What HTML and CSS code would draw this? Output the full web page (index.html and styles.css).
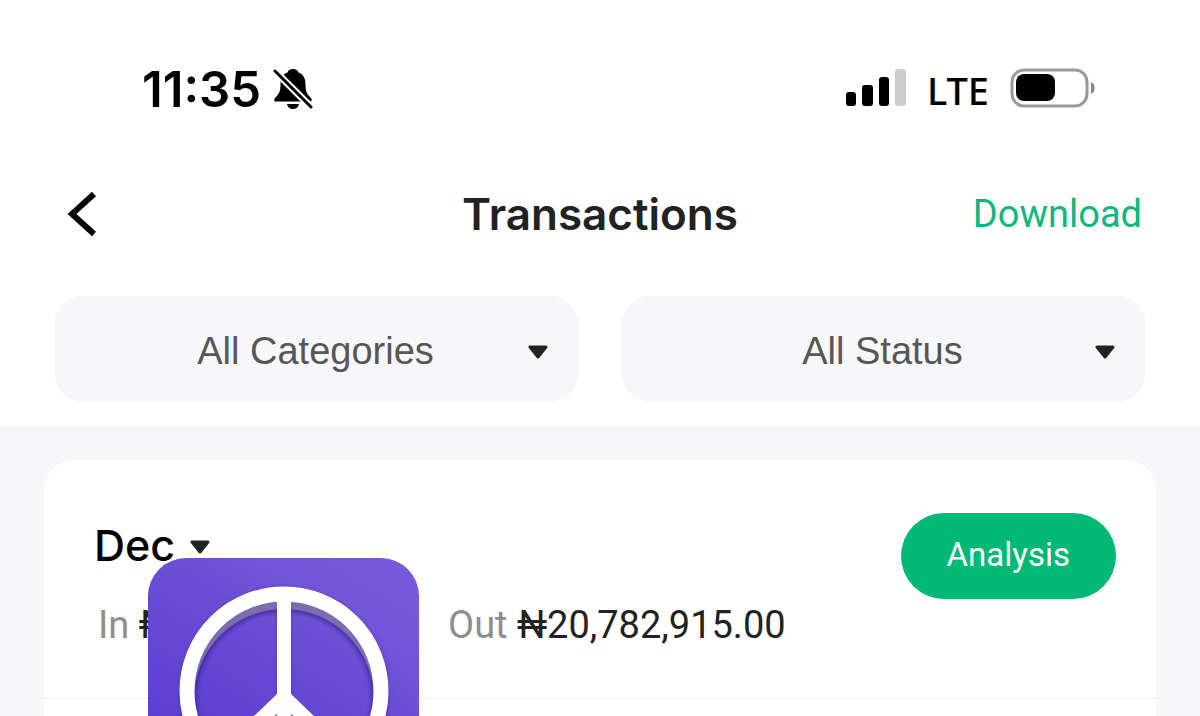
FILE: index.html
```html
<!DOCTYPE html>
<html lang="en">
<head>
<meta charset="utf-8">
<meta name="viewport" content="width=device-width, initial-scale=1">
<title>Transactions</title>
<link rel="stylesheet" href="styles.css">
</head>
<body>
<div class="page">
  <div class="status-bar">
    <div class="status-left">
      <span class="clock">11:35</span>
      <svg class="bell" width="40" height="44" viewBox="0 0 40 44" aria-hidden="true">
        <path d="M20 1c-3 0-5 1.500-5.500 3.500C9.500 6.500 7.500 10.500 7.500 16c0 7-1 9.500-5 13.500-2 2-1.500 4 .5 4h34c2 0 2.500-2 .500-4-4-4-5-6.500-5-13.500 0-5.500-2-9.500-7-11.500C25 2.500 23 1 20 1z"/>
        <path d="M14 36h12c-.500 3-3 5-6 5s-5.500-2-6-5z"/>
        <path d="M1 2L41 42" stroke="#fff" stroke-width="7"/>
        <path d="M2 3L38 39" stroke="#000" stroke-width="3" stroke-linecap="round"/>
      </svg>
    </div>
    <div class="status-right">
      <svg width="60" height="42" viewBox="0 0 60 42" aria-hidden="true">
        <rect x="0" y="23" width="10" height="14" rx="3"/>
        <rect x="16" y="16" width="11" height="21" rx="3"/>
        <rect x="33" y="8" width="10" height="29" rx="3"/>
        <rect x="49" y="0" width="11" height="37" rx="3" fill="#ccc"/>
      </svg>
      <span class="network">LTE</span>
      <svg width="86" height="44" viewBox="0 0 86 44" aria-hidden="true">
        <rect x="2" y="2" width="75" height="36" rx="12" fill="#fff" stroke="#999" stroke-width="3"/>
        <rect x="6" y="6" width="39" height="27" rx="8"/>
        <path d="M81 14c5 2 5 10 0 12z" fill="#888"/>
      </svg>
    </div>
  </div>

  <header class="top-bar">
    <button class="back" type="button" aria-label="Back">
      <svg width="30" height="46" viewBox="0 0 30 46" aria-hidden="true"><path d="M27 3L5 23l22 20" fill="none" stroke="#000" stroke-width="6"/></svg>
    </button>
    <h1 class="title">Transactions</h1>
    <a class="download" href="#download">Download</a>
  </header>

  <div class="filters">
    <div class="filter">
      <select class="filter-select" aria-label="Category"><option>All Categories</option></select>
      <svg class="caret filter-caret" width="20" height="16" viewBox="0 0 20 16" aria-hidden="true"><path d="M2 3h16l-8 10z"/></svg>
    </div>
    <div class="filter">
      <select class="filter-select" aria-label="Status"><option>All Status</option></select>
      <svg class="caret filter-caret" width="20" height="16" viewBox="0 0 20 16" aria-hidden="true"><path d="M2 3h16l-8 10z"/></svg>
    </div>
  </div>

  <main class="content">
    <section class="card">
      <div class="summary">
        <div class="figures">
          <div class="month">
            <select class="month-select" aria-label="Month"><option>Dec</option></select>
            <svg class="caret" width="20" height="20" viewBox="0 -4 20 20" aria-hidden="true"><path d="M2 3h16l-8 10z"/></svg>
          </div>
          <div class="totals">
            <div class="total total-in"><span class="label">In</span> ₦</div>
            <div class="total"><span class="label">Out</span> ₦20,782,915.00</div>
          </div>
        </div>
        <button class="analysis" type="button">Analysis</button>
      </div>
      <svg class="peace" width="271" height="271" viewBox="0 0 271 271" role="img" aria-label="Peace symbol">
        <defs>
          <linearGradient id="violet" x1="0.7" y1="0" x2="0.2" y2="0.8">
            <stop offset="0" stop-color="#7659d9"/>
            <stop offset="1" stop-color="#5a3ccf"/>
          </linearGradient>
          <linearGradient id="violet-face" gradientUnits="userSpaceOnUse" x1="190" y1="0" x2="54" y2="216">
            <stop offset="0" stop-color="#7558d9"/>
            <stop offset="1" stop-color="#583acd"/>
          </linearGradient>
          <clipPath id="inside"><circle cx="136" cy="133" r="91"/></clipPath>
          <filter id="soft" x="-20%" y="-20%" width="140%" height="140%"><feGaussianBlur stdDeviation="2"/></filter>
        </defs>
        <rect width="271" height="271" rx="38" fill="url(#violet)"/>
        <circle cx="136" cy="135" r="97" fill="none" stroke="#4329a2" stroke-width="16" opacity=".5" filter="url(#soft)"/>
        <g clip-path="url(#inside)">
          <circle cx="136" cy="133" r="92" fill="url(#violet-face)"/>
          <circle cx="136" cy="141" r="90" fill="none" stroke="#301b80" stroke-width="4" opacity=".8" filter="url(#soft)"/>
          <circle cx="136" cy="141" r="99" fill="none" stroke="#7c6cb0" stroke-width="18"/>
          <path d="M136 147L68 214M136 147l68 67" stroke="#7c6cb0" stroke-width="15"/>
        </g>
        <path d="M129 50v85M143 50v85" stroke="#4b309f" stroke-width="3" opacity=".5" filter="url(#soft)"/>
        <g fill="none" stroke="#fff">
          <circle cx="136" cy="133" r="97" stroke-width="15"/>
          <path d="M136 34v198M136 139L68 204M136 139l68 65" stroke-width="14"/>
        </g>
      </svg>
    </section>
  </main>
</div>
</body>
</html>
```
FILE: styles.css
```css
* { box-sizing: border-box; }

body {
  margin: 0;
  background: #fff;
  color: #222;
  font-family: Roboto, "Liberation Sans", sans-serif;
}

button, select {
  appearance: none;
  border: 0;
  margin: 0;
  padding: 0;
  background: none;
  font: inherit;
  color: inherit;
}

svg { display: block; }

.page {
  min-height: 100vh;
  display: flex;
  flex-direction: column;
}

.status-bar {
  display: flex;
  justify-content: space-between;
  align-items: center;
  padding: 60px 104px 0 142px;
}

.status-left { display: flex; align-items: center; gap: 12px; }

.clock {
  font: 600 49px/60px Inter, sans-serif;
  color: #000;
}

.status-right { display: flex; align-items: center; gap: 21px; }

.network {
  font: 500 38px/60px "Noto Sans", sans-serif;
  color: #000;
}

.top-bar {
  display: grid;
  grid-template-columns: 1fr auto 1fr;
  align-items: center;
  padding: 64px 58px 52px;
}

.back { justify-self: start; padding-left: 9px; }

.title {
  margin: 0;
  font: 600 44px/60px Inter, sans-serif;
}

.download {
  justify-self: end;
  font-size: 38px;
  line-height: 60px;
  color: #10b67b;
  text-decoration: none;
}

.filters {
  display: grid;
  grid-template-columns: 1fr 1fr;
  gap: 42px;
  padding: 0 54px 24px;
}

.filter { position: relative; }

.filter-select {
  display: block;
  width: 100%;
  height: 106px;
  padding: 4px 2px 0 0;
  border-radius: 30px;
  background: #f7f7fa;
  font-family: "Liberation Sans", sans-serif;
  font-size: 38px;
  color: #565657;
  text-align: center;
  text-align-last: center;
}

.caret {
  fill: #222;
  stroke: #222;
  stroke-width: 3;
  stroke-linejoin: round;
}

.filter-caret {
  position: absolute;
  right: 31px;
  top: 48px;
  pointer-events: none;
}

.content {
  flex: 1;
  display: flex;
  overflow: hidden;
  padding: 34px 44px 0;
  background: #f7f7fa;
}

.card {
  position: relative;
  flex: 1;
  border-radius: 30px 30px 0 0;
  background: #fff;
}

.summary {
  display: flex;
  justify-content: space-between;
  align-items: flex-start;
  padding: 53px 40px 42px 50px;
  border-bottom: 2px solid #f7f7f8;
}

.month { display: flex; align-items: center; gap: 14px; }

.month-select {
  font: 500 43px/64px Inter, sans-serif;
  color: #000;
}

.totals {
  display: flex;
  padding: 18px 0 0 4px;
  font-size: 38px;
  line-height: 60px;
}

.total-in { width: 350px; }

.label { color: #8e8e8e; }

.analysis {
  height: 86px;
  padding: 0 46px 3px;
  border-radius: 43px;
  background: #02b875;
  font-size: 33px;
  color: #fff;
}

.peace {
  position: absolute;
  left: 104px;
  top: 98px;
}
```
